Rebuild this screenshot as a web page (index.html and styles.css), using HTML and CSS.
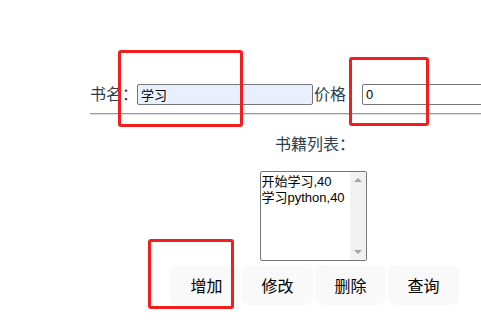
FILE: index.html
```html
<!DOCTYPE html>
<html>
<head>
<meta charset="utf-8">
<link rel="stylesheet" href="styles.css">
</head>
<body>
<div class="frame">
<div class="app">
  <div class="form">
    <div class="row">
      <span class="label">书名：</span>
      <input class="field field-name" type="text" value="学习">
      <span class="label label-price">价格</span>
      <input class="field field-price" type="text" value="0">
    </div>
    <hr class="rule">
  </div>
  <div class="title">书籍列表：</div>
  <div class="listbox">
    <div class="items">
      <div>开始学习,40</div>
      <div>学习python,40</div>
    </div>
    <div class="scrollbar">
      <span class="arrow up"></span>
      <span class="arrow down"></span>
    </div>
  </div>
  <div class="buttons">
    <button class="btn">增加</button>
    <button class="btn">修改</button>
    <button class="btn">删除</button>
    <button class="btn">查询</button>
  </div>
  <div class="mark mark-1"></div>
  <div class="mark mark-2"></div>
  <div class="mark mark-3"></div>
</div>
</div>
</body>
</html>
```
FILE: styles.css
```css
html, body {
  margin: 0;
  padding: 0;
  background: #fff;
}
.frame {
  width: 100%;
  height: 100vh;
  overflow: hidden;
}
.app {
  position: relative;
  width: 626px;
  height: 100%;
  padding-top: 84px;
  box-sizing: border-box;
  font-family: "Liberation Sans", "Noto Sans CJK SC", sans-serif;
  color: #2c3e50;
  text-align: center;
}
.form {
  width: 446px;
  margin: 0 auto;
}
.row {
  display: flex;
  align-items: center;
  height: 21px;
  font-size: 16px;
}
.label {
  width: 47px;
  text-align: left;
  white-space: nowrap;
  line-height: 21px;
}
.label-price {
  width: 32px;
  margin-left: 1px;
  margin-right: 16px;
}
.field {
  box-sizing: border-box;
  height: 21px;
  border: 1px solid #767676;
  border-radius: 2px;
  padding: 0 3px;
  font-family: "Liberation Sans", "Noto Sans CJK SC", sans-serif;
  font-size: 13px;
  color: #000;
  outline: none;
}
.field-name {
  width: 176px;
  background: #e8f0fe;
}
.field-price {
  width: 174px;
  background: #fff;
}
.rule {
  height: 0;
  margin: 8px 0 0;
  border: none;
  border-top: 1px solid #9a9a9a;
  border-bottom: 1px solid #e0e0e0;
}
.title {
  margin-top: 19px;
  font-size: 16px;
  line-height: 22px;
  padding-left: 4px;
}
.listbox {
  box-sizing: border-box;
  display: flex;
  width: 107px;
  height: 90px;
  margin: 15px auto 0;
  border: 1px solid #767676;
  border-radius: 2px;
  text-align: left;
  color: #000;
  font-size: 13px;
  line-height: 16px;
}
.items {
  flex: 1;
  padding: 2px 1px;
  white-space: nowrap;
  overflow: hidden;
}
.scrollbar {
  width: 16px;
  background: #f1f1f1;
  display: flex;
  flex-direction: column;
  justify-content: space-between;
  align-items: center;
  padding: 6px 0;
}
.arrow {
  width: 0;
  height: 0;
  border-left: 4px solid transparent;
  border-right: 4px solid transparent;
}
.arrow.up {
  border-bottom: 4px solid #a3a3a3;
}
.arrow.down {
  border-top: 4px solid #a3a3a3;
}
.buttons {
  display: flex;
  justify-content: center;
  gap: 2px;
  margin-top: 4px;
  padding-left: 2px;
}
.btn {
  width: 71px;
  height: 40px;
  border: none;
  border-radius: 8px;
  background: #f9f9f9;
  font-family: "Liberation Sans", "Noto Sans CJK SC", sans-serif;
  font-size: 16px;
  color: #000;
  padding: 0;
}
.btn:first-child {
  padding-left: 4px;
}
.mark {
  position: absolute;
  box-sizing: border-box;
  border: 3px solid #f21d1d;
  border-radius: 3px;
}
.mark-1 {
  left: 118px;
  top: 50px;
  width: 125px;
  height: 77px;
}
.mark-2 {
  left: 349px;
  top: 57px;
  width: 80px;
  height: 69px;
}
.mark-3 {
  left: 148px;
  top: 239px;
  width: 86px;
  height: 70px;
}
```
